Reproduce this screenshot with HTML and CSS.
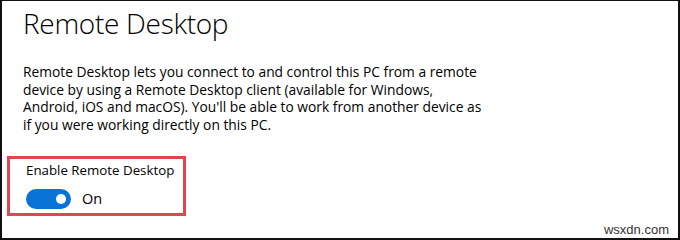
FILE: index.html
```html
<!DOCTYPE html>
<html>
<head>
<meta charset="utf-8">
<link rel="stylesheet" href="styles.css">
</head>
<body>
<div class="frame">
  <h1 class="title">Remote Desktop</h1>
  <p class="desc">Remote Desktop lets you connect to and control this PC from a remote<br>device by using a Remote Desktop client (available for Windows,<br>Android, iOS and macOS). You'll be able to work from another device as<br>if you were working directly on this PC.</p>
  <div class="highlight">
    <div class="label">Enable Remote Desktop</div>
    <div class="toggle-row">
      <span class="toggle"><span class="knob"></span></span>
      <span class="state">On</span>
    </div>
  </div>
  <div class="watermark">wsxdn.com</div>
</div>
</body>
</html>
```
FILE: styles.css
```css
html, body {
  margin: 0;
  padding: 0;
  background: #fff;
}
.frame {
  box-sizing: border-box;
  width: 680px;
  height: 240px;
  border: 2px solid #111;
  border-top-width: 1px;
  position: relative;
  font-family: "Open Sans", "Noto Sans", sans-serif;
  color: #000;
  padding: 0 0 0 21px;
}
.title {
  margin: 0;
  padding-top: 4px;
  font-size: 28px;
  font-weight: 300;
  line-height: 36px;
  letter-spacing: -0.3px;
}
.desc {
  margin: 22px 0 0 0;
  width: 560px;
  font-size: 13.8px;
  line-height: 17.5px;
}
.highlight {
  margin: 23px 0 0 -16px;
  width: 157px;
  border: 3px solid #e0474c;
  padding: 1px 0 4px 16px;
}
.label {
  font-size: 13.3px;
  line-height: 20px;
}
.toggle-row {
  display: flex;
  align-items: center;
  gap: 11px;
  margin-top: 9px;
}
.toggle {
  box-sizing: border-box;
  width: 45px;
  height: 20px;
  border-radius: 10px;
  background: #0a74d6;
  display: flex;
  align-items: center;
  justify-content: flex-end;
  padding-right: 5px;
}
.knob {
  width: 10px;
  height: 10px;
  border-radius: 50%;
  background: #fff;
}
.state {
  font-size: 14.5px;
  line-height: 20px;
}
.watermark {
  position: absolute;
  right: 9px;
  bottom: 1px;
  font-family: "Liberation Sans", Arial, sans-serif;
  font-size: 13px;
  color: #333;
}
```
